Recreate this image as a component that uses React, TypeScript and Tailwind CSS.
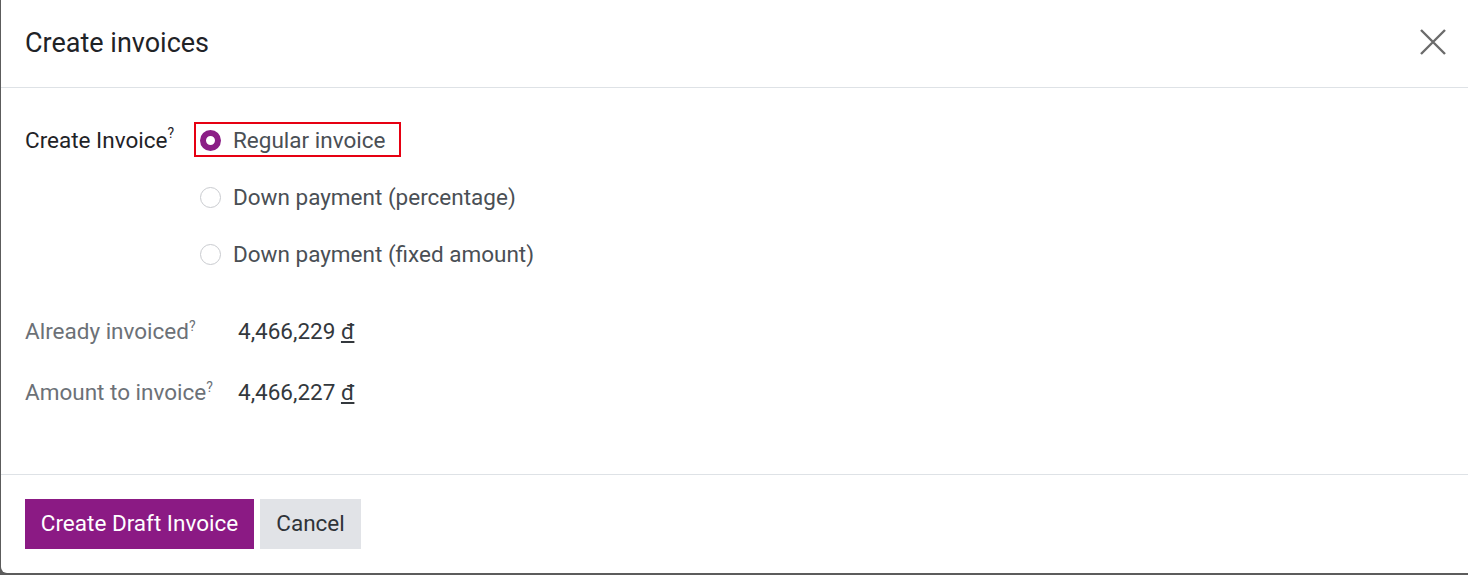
import React from "react"

const font = { fontFamily: "Roboto, 'Noto Sans', sans-serif" }

function Radio({ checked, label, h }: { checked?: boolean; label: string; h: string }) {
  return (
    <div className={`flex items-center gap-3 ${h}`}>
      <span
        className={`w-[21px] h-[21px] rounded-full flex-shrink-0 ${
          checked ? "border-[6px] border-[#8b1e86] bg-white" : "border border-[#c9cbcf] bg-white"
        }`}
      />
      <span className="text-[22.5px] text-[#4a4f55]">{label}</span>
    </div>
  )
}

export default function App() {
  return (
    <div className="w-[1468px] h-[575px] bg-[#5c5c5c] overflow-hidden" style={font}>
      <div className="ml-px w-[1467px] h-[573px] bg-white rounded-bl-md flex flex-col">
        {/* Header */}
        <div className="h-[88px] border-b border-[#dee2e6] flex items-center justify-between pl-[24px] pr-[20px]">
          <h1 className="text-[27px] text-[#1f2327] leading-none -mt-[1px]">Create invoices</h1>
          <button className="w-[30px] h-[30px] flex items-center justify-center text-[#6b6b6b] -mt-[4px]">
            <svg width="26" height="26" viewBox="0 0 26 26" fill="none" stroke="currentColor" strokeWidth="2.4">
              <path d="M1 1L25 25M25 1L1 25" />
            </svg>
          </button>
        </div>

        {/* Body */}
        <div className="flex-1 px-[24px] pt-[35px]">
          <div className="flex">
            <div className="w-[171px] h-[35px] flex items-center text-[22.5px] text-[#1f2327]">
              Create Invoice<sup className="text-[14px] -top-[8px]">?</sup>
            </div>
            <div className="flex flex-col items-start gap-[24px] -mt-[1px]">
              <div className="border-2 border-[#e60012] pl-[4px] pr-[14px] pt-[2px] -ml-[2px]">
                <Radio checked label="Regular invoice" h="h-[29px]" />
              </div>
              <div className="pl-[4px]">
                <Radio label="Down payment (percentage)" h="h-[33px]" />
              </div>
              <div className="pl-[4px]">
                <Radio label="Down payment (fixed amount)" h="h-[33px]" />
              </div>
            </div>
          </div>

          <div className="mt-[43px] flex flex-col gap-[26px]">
            <div className="flex items-center h-[35px]">
              <div className="w-[213px] text-[22.5px] text-[#6c7177]">
                Already invoiced<sup className="text-[14px] -top-[8px]">?</sup>
              </div>
              <div className="text-[22.5px] text-[#33383d]">
                4,466,229 <span className="underline">đ</span>
              </div>
            </div>
            <div className="flex items-center h-[35px]">
              <div className="w-[213px] text-[22.5px] text-[#6c7177]">
                Amount to invoice<sup className="text-[14px] -top-[8px]">?</sup>
              </div>
              <div className="text-[22.5px] text-[#33383d]">
                4,466,227 <span className="underline">đ</span>
              </div>
            </div>
          </div>
        </div>

        {/* Footer */}
        <div className="h-[99px] border-t border-[#dee2e6] px-[24px] pt-[24px] flex gap-[6px]">
          <button className="h-[50px] w-[229px] bg-[#8b1a84] text-white text-[22.5px]">Create Draft Invoice</button>
          <button className="h-[50px] w-[101px] bg-[#e1e3e7] text-[#2f3338] text-[22.5px]">Cancel</button>
        </div>
      </div>
    </div>
  )
}
